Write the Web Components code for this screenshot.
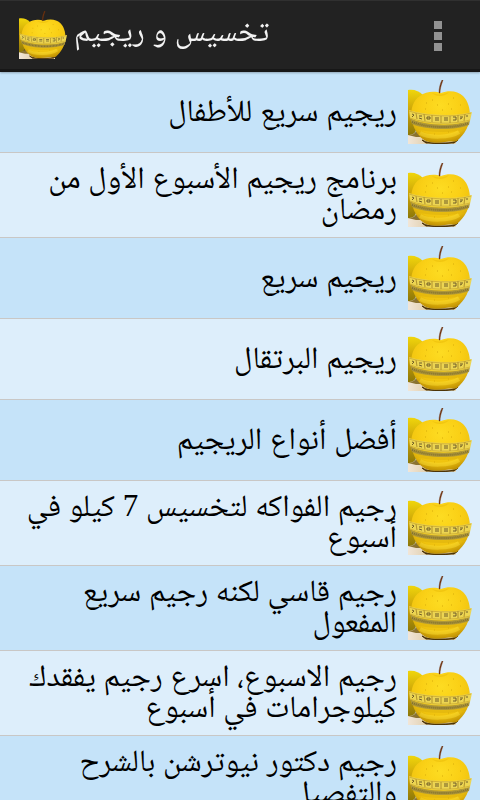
<!DOCTYPE html>
<html lang="ar" dir="rtl">
<head>
<meta charset="utf-8">
<meta name="viewport" content="width=device-width, initial-scale=1">
<title>تخسيس و ريجيم</title>
<style>
html, body { height: 100%; margin: 0; }
body { font-family: "Liberation Serif", "Noto Naskh Arabic", "Noto Sans", serif; color: #000; }
</style>
</head>
<body>
<diet-app></diet-app>

<template id="apple-template">
<style>
:host { display: block; flex: none; width: 64px; height: 64px; }
svg { display: block; width: 100%; height: 100%; }
</style>
<svg viewBox="0 0 64 64" aria-hidden="true">
  <defs>
    <radialGradient id="skin" cx=".5" cy=".28" r=".72">
      <stop offset="0" stop-color="#fddc22"/><stop offset=".45" stop-color="#fad016"/>
      <stop offset=".8" stop-color="#efc20e"/><stop offset="1" stop-color="#c09204"/>
    </radialGradient>
    <linearGradient id="floor" x1="0" y1="0" x2="1" y2="0">
      <stop offset="0" stop-color="#f1e6d8"/><stop offset=".6" stop-color="#d9c49a"/><stop offset="1" stop-color="#e8dcc0"/>
    </linearGradient>
    <linearGradient id="back" x1="0" y1="0" x2="0" y2="1">
      <stop offset="0" stop-color="#f0d60c"/><stop offset=".5" stop-color="#c9a008"/><stop offset="1" stop-color="#8c7808"/>
    </linearGradient>
    <clipPath id="body"><path d="M33 13C41 10 50 11 55 16C60 21 62 28 62 36C61 46 57 54 49 61C43 64 25 64 18 61C10 57 5 48 4 39C2 30 5 20 12 16C18 11 27 11 33 13Z"/></clipPath>
  </defs>
  <path d="M0 54H12L18 59H48V64H0Z" fill="url(#floor)"/>
  <path d="M0 10C6 9 11 11 15 15L8 50C7 54 4 55 0 55Z" fill="url(#back)"/>
  <path d="M0 55C4 55 7 54 8 51L13 57L8 57Z" fill="#8a7230"/>
  <path d="M14 60C22 65 42 65 50 60L46 63H18Z" fill="#4b3205" stroke="#4b3205"/>
  <path d="M33 13C41 10 50 11 55 16C60 21 62 28 62 36C61 46 57 54 49 61C46 62 42 61 37 62C29 63 23 63 18 61C10 57 5 48 4 39C2 30 5 20 12 16C18 11 27 11 33 13Z" fill="url(#skin)"/>
  <path d="M24 13C28 15 36 15 41 12C37 17 28 17 24 13Z" fill="#eab905" opacity=".5"/>
  <g clip-path="url(#body)">
    <path d="M0 40C18 49 47 50 64 41V48C45 54 18 53 0 47Z" fill="#d9ad0c" opacity=".5"/>
    <path d="M12 53C20 58 42 58 51 52" fill="none" stroke="#ffe43b" stroke-width="4" opacity=".4"/>
  </g>
  <path d="M2 38C15 46 49 47 62 40L61 45C47 51 17 50 4 44Z" fill="#b09838"/>
  <path d="M4 42C19 48 47 49 61 43" fill="none" stroke="#7d6c30" stroke-width="2" stroke-dasharray="1 1"/>
  <path d="M1 30C15 35 47 37 64 32L62 41C46 46 16 45 2 38Z" fill="#ecd552"/>
  <path d="M1 31C15 36 47 38 63 33M2 38C17 44 46 45 62 40" fill="none" stroke="#d3b336" stroke-width="1"/>
  <path d="M8 33L9 39M16 34L17 41M24 35V42M33 36V43M42 36V43M50 35V42M57 34L56 41" stroke="#b0922c" stroke-width="1"/>
  <path d="M4 34L6 35L4 37M11 36L14 36M11 38L14 39M19 37H22V39H19ZM27 38H31M27 40H31M36 38H40M36 40H40M45 37H48V40H45M52 37H55M52 39L54 38M59 35V37" fill="none" stroke="#6f5d28" stroke-width="1"/>
  <path d="M18 23h1M24 20h1M29 25h1M45 18h1M40 24h1M52 25h1M34 30h1M17 29h1M43 29h1M26 54h1M40 52h1" stroke="#d8ac0a" stroke-width="1"/>
  <path d="M31 13C31 8 32 4 34 0H35L34 3C33 6 32 9 32 13Z" fill="#70320f" stroke="#70320f" stroke-width=".4"/>
</svg>
</template>

<template id="bar-template">
<style>
:host {
  display: flex; align-items: center; justify-content: space-between; direction: ltr;
  box-sizing: border-box; flex: none; height: 72px; padding: 0 30px 0 19px;
  background: #222; color: #f3f3f3;
  border-top: 1px solid #303030; border-bottom: 3px solid #171717;
  box-shadow: 0 1px 2px #8fa5b5; position: relative;
}
.brand { display: flex; align-items: center; gap: 7px; }
fruit-icon { width: 48px; height: 48px; }
h1 { margin: 0; font-size: 31px; font-weight: 400; line-height: 32px; padding-bottom: 8px; white-space: nowrap; }
button {
  display: flex; flex-direction: column; align-items: center; gap: 3px;
  padding: 8px 8px 6px; border: 0; background: none;
}
i { width: 8px; height: 8px; background: #929292; }
</style>
<div class="brand"><fruit-icon></fruit-icon><h1 dir="rtl"><slot></slot></h1></div>
<button type="button" aria-label="القائمة"><i></i><i></i><i></i></button>
</template>

<template id="row-template">
<style>
:host { display: block; background: #ddeefb; border-bottom: 1px solid #c9c7c5; }
:host(:nth-of-type(odd)) { background: #c5e3f9; }
a {
  display: flex; align-items: center; gap: 11px; box-sizing: border-box;
  min-height: 80px; padding: 8px 8px 8px 16px;
  color: inherit; text-decoration: none;
}
span { flex: 1; padding: 1px 0 5px; font-size: 31px; line-height: 31px; }
</style>
<a href="#"><fruit-icon></fruit-icon><span><slot></slot></span></a>
</template>

<template id="app-template">
<style>
:host { display: flex; flex-direction: column; height: 100%; overflow: hidden; }
main { flex: 1; min-height: 0; overflow-y: auto; scrollbar-width: none; background: #c5e3f9; }
</style>
<app-bar>تخسيس و ريجيم</app-bar>
<main>
  <diet-row>ريجيم سريع للأطفال</diet-row>
  <diet-row>برنامج ريجيم الأسبوع الأول من رمضان</diet-row>
  <diet-row>ريجيم سريع</diet-row>
  <diet-row>ريجيم البرتقال</diet-row>
  <diet-row>أفضل أنواع الريجيم</diet-row>
  <diet-row>رجيم الفواكه لتخسيس 7 كيلو في أسبوع</diet-row>
  <diet-row>رجيم قاسي لكنه رجيم سريع المفعول</diet-row>
  <diet-row>رجيم الاسبوع، اسرع رجيم يفقدك كيلوجرامات في أسبوع</diet-row>
  <diet-row>رجيم دكتور نيوترشن بالشرح والتفصيل</diet-row>
</main>
</template>

<script>
function define(name, templateId) {
  customElements.define(name, class extends HTMLElement {
    constructor() {
      super();
      this.attachShadow({ mode: 'open' })
        .append(document.getElementById(templateId).content.cloneNode(true));
    }
  });
}
define('fruit-icon', 'apple-template');
define('app-bar', 'bar-template');
define('diet-row', 'row-template');
define('diet-app', 'app-template');
</script>
</body>
</html>
